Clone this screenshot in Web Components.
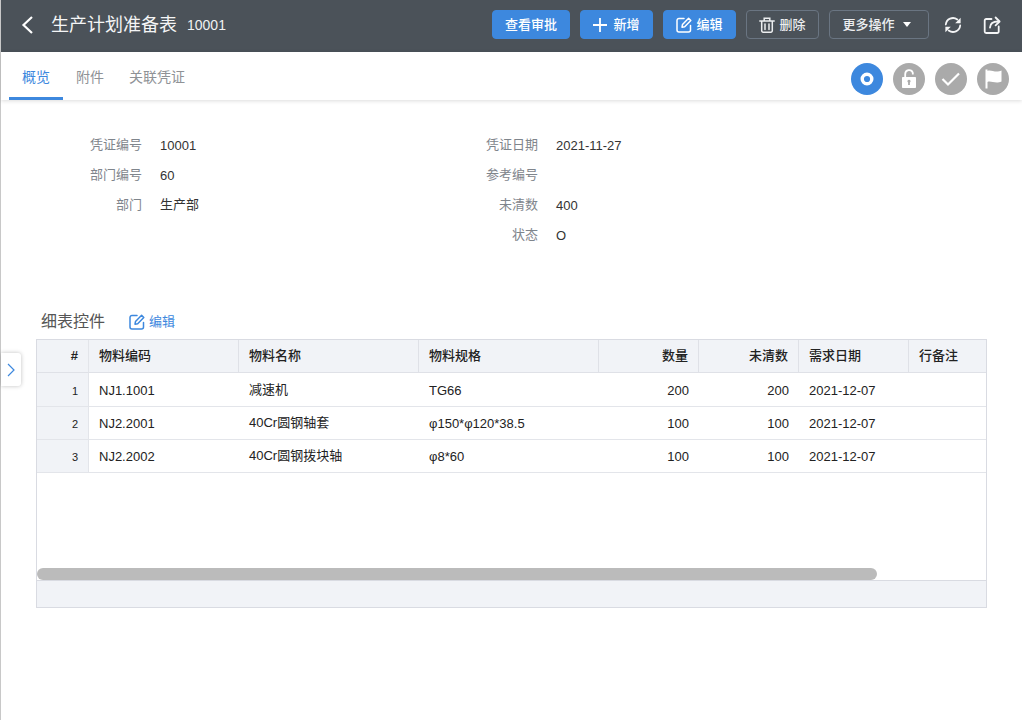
<!DOCTYPE html>
<html lang="zh">
<head>
<meta charset="utf-8">
<title>生产计划准备表</title>
<style>
  html, body { margin: 0; height: 100%; background: #fff; overflow: hidden; }
  body { font: 13px/18px "Liberation Sans", "Noto Sans CJK SC", sans-serif; color: #333; }
</style>
</head>
<body>
<voucher-page></voucher-page>

<script>
const ICONS = {
    plus: '<svg width="14" height="14" viewBox="0 0 14 14" fill="none" stroke="currentColor" stroke-width="1.8"><path d="M7 0v14M0 7h14"/></svg>',
    edit: '<svg width="16" height="16" viewBox="0 0 16 16" fill="none" stroke="currentColor" stroke-width="1.5" stroke-linecap="round" stroke-linejoin="round"><path d="M8 1.500H3a2 2 0 0 0-2 2V13a2 2 0 0 0 2 2h9.500a2 2 0 0 0 2-2V8.500"/><path d="M6 10.200l.5-2.700L12.600 1.300l2.200 2.200-6.100 6.200z"/></svg>',
    trash: '<svg width="16" height="16" viewBox="0 0 16 16" fill="none" stroke="currentColor" stroke-width="1.5" stroke-linecap="round"><path d="M.8 4h14.400M5.200 4V1.200h5.600V4M2.700 4v9.800A1.400 1.400 0 0 0 4.100 15.200h7.800a1.400 1.400 0 0 0 1.400-1.400V4M6 7v5.500M10 7v5.500"/></svg>',
    refresh: '<svg width="18" height="18" viewBox="0 0 18 18" fill="none" stroke="currentColor" stroke-width="1.800" stroke-linecap="round"><path d="M1.800 8.500A7.200 7.200 0 0 1 13.300 3.500"/><path d="M16.200 9.500A7.200 7.200 0 0 1 4.700 14.500"/><path d="M16.600 1.800v5.400h-5.400z" fill="currentColor" stroke="none"/><path d="M1.400 16.200v-5.400h5.400z" fill="currentColor" stroke="none"/></svg>',
    share: '<svg width="18" height="18" viewBox="0 0 18 18" fill="none" stroke="currentColor" stroke-width="1.800" stroke-linecap="round" stroke-linejoin="round"><path d="M8.500 3H3.200a1.500 1.500 0 0 0-1.500 1.500v11a1.500 1.500 0 0 0 1.500 1.500h11a1.500 1.500 0 0 0 1.500-1.500V10.500"/><path d="M7 11.500c.2-3.500 2.700-6 8-6"/><path d="M12.600 1.500l4 4-4 3.800"/></svg>',
    back: '<svg width="14" height="20" viewBox="0 0 14 20" fill="none" stroke="currentColor" stroke-width="2.200"><path d="M12 2 3.500 10 12 18"/></svg>',
    ring: '<svg width="14" height="14" viewBox="0 0 14 14" fill="none" stroke="#fff" stroke-width="3.400"><circle cx="7" cy="7" r="4.800"/></svg>',
    lock: '<svg width="18" height="20" viewBox="0 0 18 20"><path d="M5.200 9V5a3.900 3.900 0 0 1 7.600-1.200V5.500" fill="none" stroke="#fff" stroke-width="1.800"/><path fill="#fff" fill-rule="evenodd" d="M2.800 8h12.400a.8.800 0 0 1 .8.800v9.400a.8.800 0 0 1-.8.800H2.800a.8.800 0 0 1-.8-.8V8.800a.8.800 0 0 1 .8-.8zM9 10.700a1.600 1.600 0 0 0-.9 2.900v2.400h1.800v-2.400A1.600 1.600 0 0 0 9 10.700z"/></svg>',
    check: '<svg width="20" height="16" viewBox="0 0 20 16" fill="none" stroke="#fff" stroke-width="2.200"><path d="M1.500 8l5.500 5.500L18 2.500"/></svg>',
    flag: '<svg width="18" height="20" viewBox="0 0 18 20" fill="#fff"><path d="M1.500 .5h2V2c3.500-1.800 8 2.500 14-.5v11c-6 3-10.500-1.200-14 .5v6.500h-2z"/></svg>',
    chevron: '<svg width="8" height="14" viewBox="0 0 8 14" fill="none" stroke="currentColor" stroke-width="1.200"><path d="M1 1l6 6-6 6"/></svg>',
};

const hasCjk = text => /[\u4e00-\u9fff]/.test(text);

class ToolButton extends HTMLElement {
    constructor() {
        super();
        this.attachShadow({ mode: 'open' });
        const icon = ICONS[this.getAttribute('icon')] || '';
        this.shadowRoot.innerHTML = `
            <style>
                :host {
                    display: inline-flex;
                    align-items: center;
                    justify-content: center;
                    gap: 4px;
                    box-sizing: border-box;
                    height: 29px;
                    border-radius: 4px;
                    font-size: 13px;
                    font-weight: 500;
                    line-height: 18px;
                    color: #fff;
                    background: #3d88de;
                    border: 1px solid #3d88de;
                }
                :host([outline]) {
                    background: transparent;
                    border-color: #6a7582;
                    color: #eceef0;
                }
                :host([icon="plus"]) { gap: 6px; }
                svg { display: block; }
            </style>
            ${icon}<slot></slot>
        `;
    }
}

class AppHeader extends HTMLElement {
    constructor() {
        super();
        this.attachShadow({ mode: 'open' });
        this.shadowRoot.innerHTML = `
            <style>
                :host {
                    display: flex;
                    align-items: center;
                    box-sizing: border-box;
                    height: 52px;
                    flex: none;
                    background: #4b5259;
                    color: #fff;
                    padding: 0 21px 3px 19px;
                }
                .back { display: flex; margin-right: 17px; width: 14px; }
                h1 { margin: 0; font-size: 18px; line-height: 24px; font-weight: 400; color: #f4f5f6; }
                .no { margin-left: 10px; font-size: 14px; font-weight: 500; color: #f0f1f2; flex: 1; }
                .bar { display: flex; gap: 10px; align-items: center; }
                .w78 { width: 78px; }
                .w73 { width: 73px; }
                .more { width: 100px; gap: 8px; }
                .caret { width: 0; height: 0; margin-right: 5px; border: 4.500px solid transparent; border-top: 5px solid #fff; border-bottom: 0; }
                .icon { display: flex; color: #f4f5f6; }
            </style>
            <span class="back">${ICONS.back}</span>
            <h1>生产计划准备表</h1>
            <span class="no">10001</span>
            <div class="bar">
                <tool-button class="w78">查看审批</tool-button>
                <tool-button class="w73" icon="plus">新增</tool-button>
                <tool-button class="w73" icon="edit">编辑</tool-button>
                <tool-button class="w73" icon="trash" outline>删除</tool-button>
                <tool-button class="more" outline>更多操作<span class="caret"></span></tool-button>
                <span class="icon" style="margin-left:5px">${ICONS.refresh}</span>
                <span class="icon" style="margin-left:11px">${ICONS.share}</span>
            </div>
        `;
    }
}

class TabBar extends HTMLElement {
    constructor() {
        super();
        this.attachShadow({ mode: 'open' });
        this.shadowRoot.innerHTML = `
            <style>
                :host {
                    display: flex;
                    flex: none;
                    height: 48px;
                    align-items: stretch;
                    padding: 0 13px 0 8px;
                    background: #fff;
                    box-shadow: 0 1px 4px rgba(0, 0, 0, 0.14);
                    position: relative;
                    font-size: 14px;
                }
                .tab {
                    box-sizing: border-box;
                    padding: 15px 13px 0;
                    line-height: 20px;
                    color: #8f9296;
                    border-bottom: 3px solid transparent;
                }
                .tab.on { color: #3d88de; border-bottom-color: #3d88de; }
                .tab.last { padding-left: 12px; }
                .status { margin-left: auto; display: flex; gap: 10px; align-items: center; padding-top: 6px; }
                .dot {
                    width: 32px;
                    height: 32px;
                    border-radius: 50%;
                    background: #aaaaaa;
                    display: flex;
                    align-items: center;
                    justify-content: center;
                }
                .dot.on { background: #3d88de; }
            </style>
            <div class="tab on">概览</div>
            <div class="tab">附件</div>
            <div class="tab last">关联凭证</div>
            <div class="status">
                <span class="dot on">${ICONS.ring}</span>
                <span class="dot">${ICONS.lock}</span>
                <span class="dot">${ICONS.check}</span>
                <span class="dot">${ICONS.flag}</span>
            </div>
        `;
    }
}

class FormField extends HTMLElement {
    constructor() {
        super();
        this.attachShadow({ mode: 'open' });
        const extra = hasCjk(this.textContent) ? '' : ' latin';
        this.shadowRoot.innerHTML = `
            <style>
                :host { display: flex; height: 30px; align-items: center; font-size: 13px; line-height: 18px; }
                .label { width: 141px; text-align: right; color: #7f858c; }
                .value { margin-left: 18px; color: #333; }
                .latin { padding-top: 2px; }
            </style>
            <span class="label">${this.getAttribute('label')}</span>
            <span class="value${extra}"><slot></slot></span>
        `;
    }
}

class VoucherForm extends HTMLElement {
    constructor() {
        super();
        this.attachShadow({ mode: 'open' });
        this.shadowRoot.innerHTML = `
            <style>
                :host {
                    display: grid;
                    grid-template-columns: 396px 396px;
                    grid-auto-flow: column;
                    grid-template-rows: repeat(4, 30px);
                    padding-top: 30px;
                    height: 120px;
                }
            </style>
            <form-field label="凭证编号">10001</form-field>
            <form-field label="部门编号">60</form-field>
            <form-field label="部门">生产部</form-field>
            <span></span>
            <form-field label="凭证日期">2021-11-27</form-field>
            <form-field label="参考编号"></form-field>
            <form-field label="未清数">400</form-field>
            <form-field label="状态">O</form-field>
        `;
    }
}

class DetailTable extends HTMLElement {
    constructor() {
        super();
        this.attachShadow({ mode: 'open' });
        const head = ['#', '物料编码', '物料名称', '物料规格', '数量', '未清数', '需求日期', '行备注'];
        const rows = [
            ['1', 'NJ1.1001', '减速机', 'TG66', '200', '200', '2021-12-07', ''],
            ['2', 'NJ2.2001', '40Cr圆钢轴套', 'φ150*φ120*38.5', '100', '100', '2021-12-07', ''],
            ['3', 'NJ2.2002', '40Cr圆钢拨块轴', 'φ8*60', '100', '100', '2021-12-07', ''],
        ];
        const alignOf = i => (i === 4 || i === 5 ? ' r' : '');
        const headHtml = head.map((t, i) =>
            `<div class="th${i === 0 ? ' idx' : ''}${alignOf(i)}">${t}</div>`).join('');
        const rowHtml = rows.map(r => r.map((t, i) =>
            `<div class="td${i === 0 ? ' idx' : ''}${alignOf(i)}${hasCjk(t) ? '' : ' latin'}">${t}</div>`).join('')).join('');
        this.shadowRoot.innerHTML = `
            <style>
                :host {
                    display: flex;
                    flex-direction: column;
                    box-sizing: border-box;
                    height: 269px;
                    margin-left: 35px;
                    width: 951px;
                    border: 1px solid #d9dbe2;
                    position: relative;
                    font-size: 13px;
                    color: #222;
                }
                .grid {
                    display: grid;
                    grid-template-columns: 52px 150px 180px 180px 100px 100px 110px 77px;
                    grid-template-rows: 33px 34px 33px 33px;
                    flex: 1;
                    align-content: start;
                    overflow: hidden;
                }
                .th, .td {
                    display: flex;
                    align-items: center;
                    box-sizing: border-box;
                    padding: 0 10px;
                    white-space: nowrap;
                    overflow: hidden;
                    line-height: 18px;
                    border-bottom: 1px solid #e3e5ea;
                }
                .td.latin { padding-top: 2px; }
                .th {
                    background: #f1f3f7;
                    font-weight: 500;
                    color: #222;
                    border-right: 1px solid #dfe1e7;
                    border-bottom-color: #dfe1e7;
                }
                .th:nth-child(8) { border-right: 0; }
                .r { justify-content: flex-end; }
                .th.idx, .td.idx { justify-content: flex-end; padding-right: 10px; padding-left: 0; border-right: 1px solid #e3e5ea; }
                .th.idx { font-weight: 700; }
                .td.idx { background: #f1f3f7; font-size: 11px; }
                .foot {
                    flex: none;
                    height: 26px;
                    background: #f1f3f7;
                    border-top: 1px solid #d9dbe2;
                }
                .thumb {
                    position: absolute;
                    left: 0;
                    bottom: 27px;
                    width: 840px;
                    height: 12px;
                    border-radius: 6px;
                    background: #bbbbbb;
                }
            </style>
            <div class="grid">${headHtml}${rowHtml}</div>
            <div class="foot"></div>
            <div class="thumb"></div>
        `;
    }
}

class DetailSection extends HTMLElement {
    constructor() {
        super();
        this.attachShadow({ mode: 'open' });
        this.shadowRoot.innerHTML = `
            <style>
                :host { display: block; margin-top: 53px; }
                .title { display: flex; align-items: center; height: 36px; padding: 2px 0 0 40px; box-sizing: border-box; }
                .name { font-size: 16px; line-height: 22px; color: #555; }
                .edit { display: flex; align-items: center; gap: 4px; margin-left: 24px; color: #3d88de; font-size: 13px; }
                svg { display: block; }
            </style>
            <div class="title">
                <span class="name">细表控件</span>
                <span class="edit">${ICONS.edit}编辑</span>
            </div>
            <slot></slot>
        `;
    }
}

class SideToggle extends HTMLElement {
    constructor() {
        super();
        this.attachShadow({ mode: 'open' });
        this.shadowRoot.innerHTML = `
            <style>
                :host {
                    position: absolute;
                    left: 0;
                    top: 353px;
                    width: 20px;
                    height: 33px;
                    background: #fff;
                    border-radius: 0 3px 3px 0;
                    box-shadow: 0 0 4px rgba(0, 0, 0, 0.25);
                    display: flex;
                    align-items: center;
                    justify-content: center;
                    color: #3d88de;
                }
                svg { display: block; }
            </style>
            ${ICONS.chevron}
        `;
    }
}

class VoucherPage extends HTMLElement {
    constructor() {
        super();
        this.attachShadow({ mode: 'open' });
        this.shadowRoot.innerHTML = `
            <style>
                :host {
                    display: flex;
                    flex-direction: column;
                    box-sizing: border-box;
                    height: 720px;
                    border-left: 1px solid #c8c8c8;
                    position: relative;
                }
            </style>
            <app-header></app-header>
            <tab-bar></tab-bar>
            <voucher-form></voucher-form>
            <detail-section><detail-table></detail-table></detail-section>
            <side-toggle></side-toggle>
        `;
    }
}

customElements.define('tool-button', ToolButton);
customElements.define('app-header', AppHeader);
customElements.define('tab-bar', TabBar);
customElements.define('form-field', FormField);
customElements.define('voucher-form', VoucherForm);
customElements.define('detail-table', DetailTable);
customElements.define('detail-section', DetailSection);
customElements.define('side-toggle', SideToggle);
customElements.define('voucher-page', VoucherPage);
</script>
</body>
</html>
